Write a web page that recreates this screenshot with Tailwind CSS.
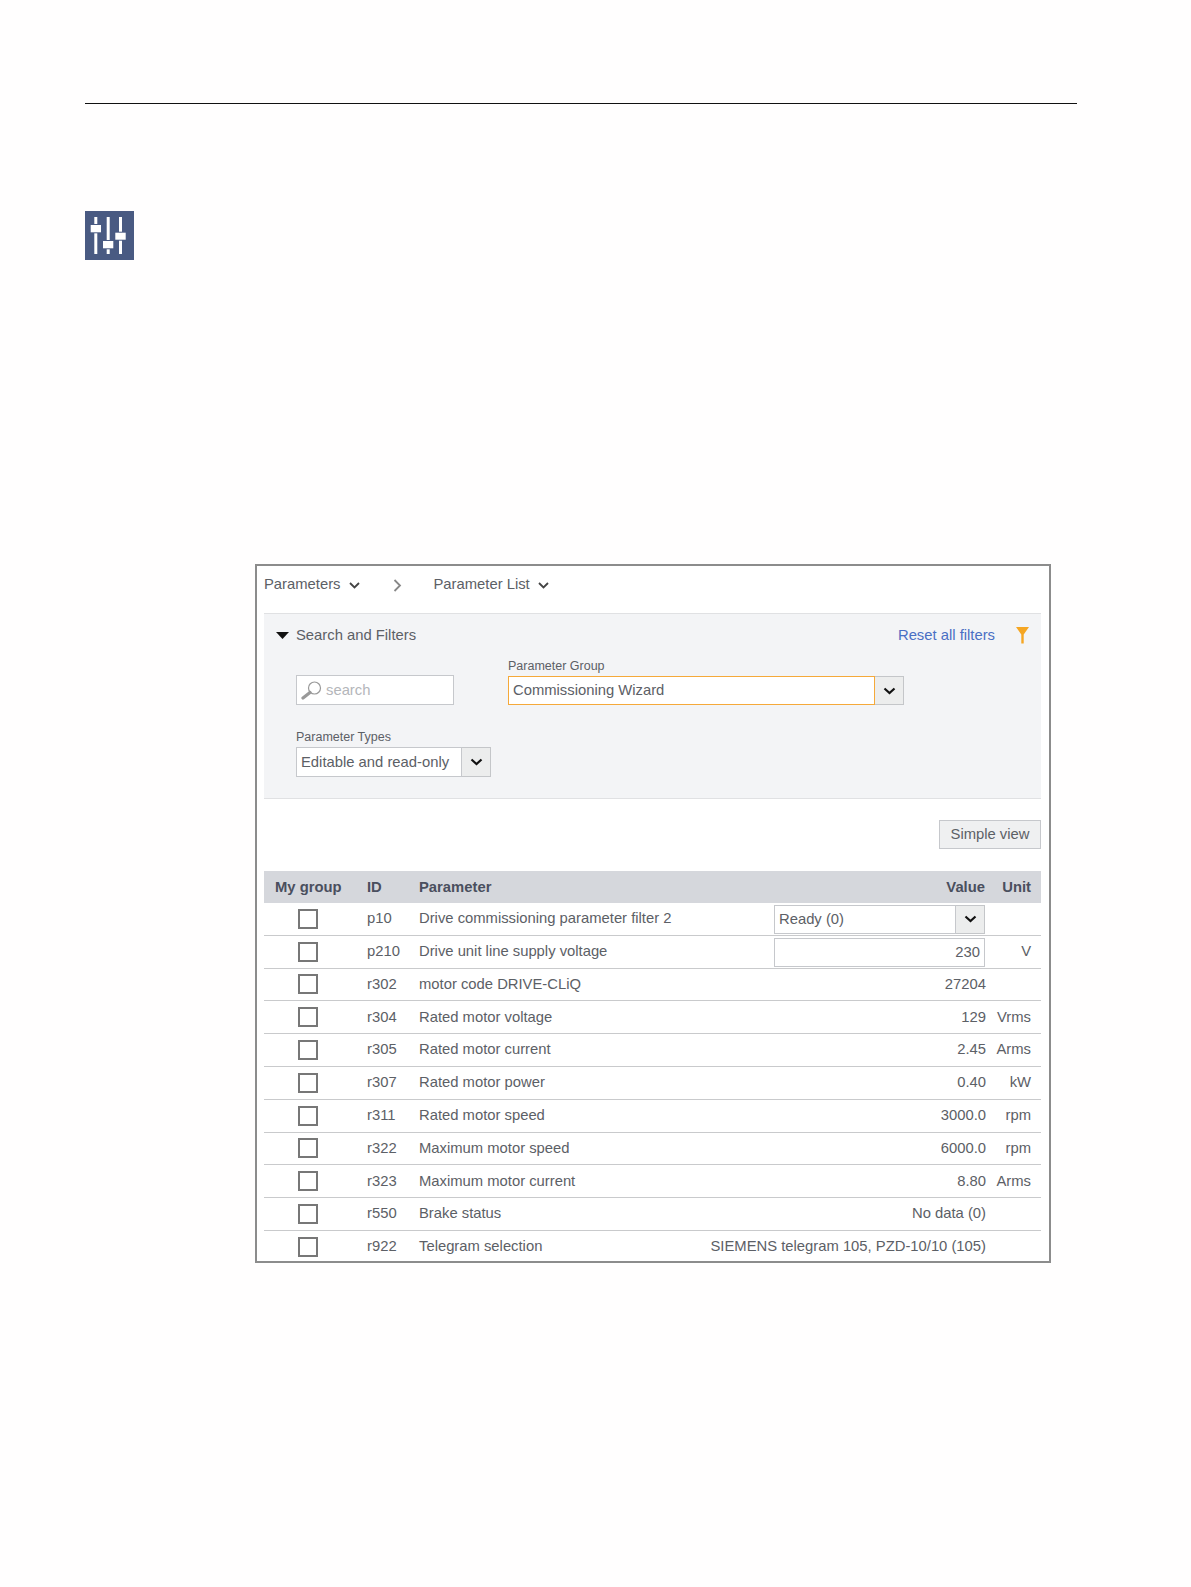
<!DOCTYPE html>
<html>
<head>
    <title>Parameter List</title>
    <script src="https://cdn.jsdelivr.net/npm/@tailwindcss/browser@4"></script>
</head>
<body class="bg-[#fffefe] font-['Liberation_Sans',Arial,sans-serif] text-[#5c6066] text-[14.8px]">
    <div class="w-[1191px] h-[1587px] overflow-hidden pt-[103px]">
        <div class="ml-[85px] w-[992px] h-px bg-[#111]"></div>

        <!-- Parameter icon -->
        <div class="ml-[85px] mt-[107px] w-[49px] h-[49px] bg-[#495a82]">
            <svg width="49" height="49" viewBox="0 0 49 49">
                <g fill="#fff">
                    <rect x="9.300" y="6" width="3" height="37"/>
                    <rect x="21.700" y="6" width="3" height="37"/>
                    <rect x="34" y="6" width="3" height="37"/>
                </g>
                <g fill="#fff" stroke="#495a82" stroke-width="2" paint-order="stroke">
                    <rect x="5.700" y="14" width="10.300" height="7.300"/>
                    <rect x="18" y="30" width="10.300" height="7.300"/>
                    <rect x="30.300" y="21.700" width="10.400" height="7"/>
                </g>
            </svg>
        </div>

        <!-- Screenshot panel -->
        <div class="ml-[255px] mt-[304px] w-[796px] h-[699px] border-2 border-[#8c8c8c] bg-white pl-[7px] pr-[8px] box-border overflow-hidden">
            <div class="h-[47px] pb-[10px] flex items-center">
                <span>Parameters</span>
                <svg class="ml-[9px] mt-[2px]" width="11" height="7" viewBox="0 0 11 7"><path d="M1 1l4.500 4.500L10 1" fill="none" stroke="#444" stroke-width="1.800"/></svg>
                <svg class="ml-[33px] mt-[1px]" width="9" height="13" viewBox="0 0 9 13"><path d="M1.500 1l5.500 5.500L1.500 12" fill="none" stroke="#888" stroke-width="1.800"/></svg>
                <span class="ml-[31px]">Parameter List</span>
                <svg class="ml-[8px] mt-[2px]" width="11" height="7" viewBox="0 0 11 7"><path d="M1 1l4.500 4.500L10 1" fill="none" stroke="#444" stroke-width="1.800"/></svg>
            </div>

            <!-- Search and Filters -->
            <div class="h-[186px] bg-[#f3f4f6] border-t border-b border-[#e0e1e3] pl-[12px] pr-[12px] box-border">
                <div class="h-[43px] flex items-center">
                    <svg width="13" height="7" viewBox="0 0 13 7"><path d="M0 0h13L6.500 7z" fill="#111"/></svg>
                    <span class="ml-[7px]">Search and Filters</span>
                    <span class="ml-auto text-[#4a6fc4]">Reset all filters</span>
                    <svg class="ml-[21px]" width="13" height="17" viewBox="0 0 13 17"><path d="M0 0h13L7.700 7.500V16.500H5.300V7.500z" fill="#f5a623"/></svg>
                </div>
                <div class="flex items-end ml-[20px] mt-[2px]">
                    <div class="w-[158px] h-[30px] bg-white border border-[#c6c8cc] flex items-center">
                        <svg class="ml-[4px]" width="21" height="19" viewBox="0 0 21 19">
                            <circle cx="13.500" cy="7" r="6" fill="#fff" stroke="#999" stroke-width="1.200"/>
                            <path d="M9 11.500L2 17" stroke="#999" stroke-width="3.200" stroke-linecap="round"/>
                        </svg>
                        <span class="ml-[4px] text-[#b4b6ba]">search</span>
                    </div>
                    <div class="ml-[54px]">
                        <div class="text-[12.500px] leading-[14px] mb-[3px]">Parameter Group</div>
                        <div class="flex w-[396px] h-[29px]">
                            <div class="flex-1 bg-white border border-[#f5a93a] flex items-center pl-[4px]">Commissioning Wizard</div>
                            <div class="w-[29px] bg-[#eceded] border border-[#c4c6c9] border-l-0 flex items-center justify-center">
                                <svg width="13" height="8" viewBox="0 0 13 8"><path d="M1.500 1.500l5 4.500 5-4.500" fill="none" stroke="#111" stroke-width="2.200"/></svg>
                            </div>
                        </div>
                    </div>
                </div>
                <div class="ml-[20px] mt-[25px]">
                    <div class="text-[12.500px] leading-[14px] mb-[3px]">Parameter Types</div>
                    <div class="flex w-[195px] h-[30px]">
                        <div class="flex-1 bg-white border border-[#c6c8cc] flex items-center pl-[4px] whitespace-nowrap">Editable and read-only</div>
                        <div class="w-[29px] bg-[#eceded] border border-[#c4c6c9] border-l-0 flex items-center justify-center">
                            <svg width="13" height="8" viewBox="0 0 13 8"><path d="M1.500 1.500l5 4.500 5-4.500" fill="none" stroke="#111" stroke-width="2.200"/></svg>
                        </div>
                    </div>
                </div>
            </div>

            <div class="h-[72px] flex justify-end pt-[21px]">
                <div class="w-[102px] h-[29px] bg-[#eff0f1] border border-[#c6c8cc] flex items-center justify-center">Simple view</div>
            </div>

            <!-- Table -->
            <div class="h-[32px] bg-[#d5d7dc] flex items-center font-bold text-[#4a4f5e]">
                <span class="w-[103px] pl-[11px]">My group</span>
                <span class="w-[52px]">ID</span>
                <span class="flex-1">Parameter</span>
                <span>Value</span>
                <span class="w-[56px] pr-[10px] text-right">Unit</span>
            </div>

            <div class="h-[32.800px] border-b border-[#c9cacc] flex items-center">
                <span class="w-[103px] flex justify-center pr-[15px]"><i class="block w-[20px] h-[20px] border-2 border-[#777] bg-white"></i></span>
                <span class="w-[52px] mb-px">p10</span>
                <span class="w-[355px] mb-px">Drive commissioning parameter filter 2</span>
                <div class="flex w-[211px] h-[29px] mt-[1px]">
                    <div class="flex-1 bg-white border border-[#c6c8cc] flex items-center pl-[4px]">Ready (0)</div>
                    <div class="w-[29px] bg-[#eceded] border border-[#c4c6c9] border-l-0 flex items-center justify-center">
                        <svg width="13" height="8" viewBox="0 0 13 8"><path d="M1.500 1.500l5 4.500 5-4.500" fill="none" stroke="#111" stroke-width="2.200"/></svg>
                    </div>
                </div>
            </div>
            <div class="h-[32.800px] border-b border-[#c9cacc] flex items-center">
                <span class="w-[103px] flex justify-center pr-[15px]"><i class="block w-[20px] h-[20px] border-2 border-[#777] bg-white"></i></span>
                <span class="w-[52px] mb-px">p210</span>
                <span class="w-[355px] mb-px">Drive unit line supply voltage</span>
                <div class="w-[211px] h-[29px] mt-[1px] bg-white border border-[#c6c8cc] flex items-center justify-end pr-[4px]">230</div>
                <span class="w-[56px] pr-[10px] text-right mb-px">V</span>
            </div>
            <div class="h-[32.800px] border-b border-[#c9cacc] flex items-center">
                <span class="w-[103px] flex justify-center pr-[15px]"><i class="block w-[20px] h-[20px] border-2 border-[#777] bg-white"></i></span>
                <span class="w-[52px] mb-px">r302</span>
                <span class="w-[355px] mb-px">motor code DRIVE-CLiQ</span>
                <span class="w-[212px] text-right mb-px">27204</span>
            </div>
            <div class="h-[32.800px] border-b border-[#c9cacc] flex items-center">
                <span class="w-[103px] flex justify-center pr-[15px]"><i class="block w-[20px] h-[20px] border-2 border-[#777] bg-white"></i></span>
                <span class="w-[52px] mb-px">r304</span>
                <span class="w-[355px] mb-px">Rated motor voltage</span>
                <span class="w-[212px] text-right mb-px">129</span>
                <span class="w-[55px] pr-[10px] text-right mb-px">Vrms</span>
            </div>
            <div class="h-[32.800px] border-b border-[#c9cacc] flex items-center">
                <span class="w-[103px] flex justify-center pr-[15px]"><i class="block w-[20px] h-[20px] border-2 border-[#777] bg-white"></i></span>
                <span class="w-[52px] mb-px">r305</span>
                <span class="w-[355px] mb-px">Rated motor current</span>
                <span class="w-[212px] text-right mb-px">2.45</span>
                <span class="w-[55px] pr-[10px] text-right mb-px">Arms</span>
            </div>
            <div class="h-[32.800px] border-b border-[#c9cacc] flex items-center">
                <span class="w-[103px] flex justify-center pr-[15px]"><i class="block w-[20px] h-[20px] border-2 border-[#777] bg-white"></i></span>
                <span class="w-[52px] mb-px">r307</span>
                <span class="w-[355px] mb-px">Rated motor power</span>
                <span class="w-[212px] text-right mb-px">0.40</span>
                <span class="w-[55px] pr-[10px] text-right mb-px">kW</span>
            </div>
            <div class="h-[32.800px] border-b border-[#c9cacc] flex items-center">
                <span class="w-[103px] flex justify-center pr-[15px]"><i class="block w-[20px] h-[20px] border-2 border-[#777] bg-white"></i></span>
                <span class="w-[52px] mb-px">r311</span>
                <span class="w-[355px] mb-px">Rated motor speed</span>
                <span class="w-[212px] text-right mb-px">3000.0</span>
                <span class="w-[55px] pr-[10px] text-right mb-px">rpm</span>
            </div>
            <div class="h-[32.800px] border-b border-[#c9cacc] flex items-center">
                <span class="w-[103px] flex justify-center pr-[15px]"><i class="block w-[20px] h-[20px] border-2 border-[#777] bg-white"></i></span>
                <span class="w-[52px] mb-px">r322</span>
                <span class="w-[355px] mb-px">Maximum motor speed</span>
                <span class="w-[212px] text-right mb-px">6000.0</span>
                <span class="w-[55px] pr-[10px] text-right mb-px">rpm</span>
            </div>
            <div class="h-[32.800px] border-b border-[#c9cacc] flex items-center">
                <span class="w-[103px] flex justify-center pr-[15px]"><i class="block w-[20px] h-[20px] border-2 border-[#777] bg-white"></i></span>
                <span class="w-[52px] mb-px">r323</span>
                <span class="w-[355px] mb-px">Maximum motor current</span>
                <span class="w-[212px] text-right mb-px">8.80</span>
                <span class="w-[55px] pr-[10px] text-right mb-px">Arms</span>
            </div>
            <div class="h-[32.800px] border-b border-[#c9cacc] flex items-center">
                <span class="w-[103px] flex justify-center pr-[15px]"><i class="block w-[20px] h-[20px] border-2 border-[#777] bg-white"></i></span>
                <span class="w-[52px] mb-px">r550</span>
                <span class="w-[355px] mb-px">Brake status</span>
                <span class="w-[212px] text-right mb-px">No data (0)</span>
            </div>
            <div class="h-[32px] flex items-center">
                <span class="w-[103px] flex justify-center pr-[15px]"><i class="block w-[20px] h-[20px] border-2 border-[#777] bg-white"></i></span>
                <span class="w-[52px] mb-px">r922</span>
                <span class="w-[140px] whitespace-nowrap mb-px">Telegram selection</span>
                <span class="w-[427px] text-right whitespace-nowrap mb-px">SIEMENS telegram 105, PZD-10/10 (105)</span>
            </div>
        </div>
    </div>
</body>
</html>
